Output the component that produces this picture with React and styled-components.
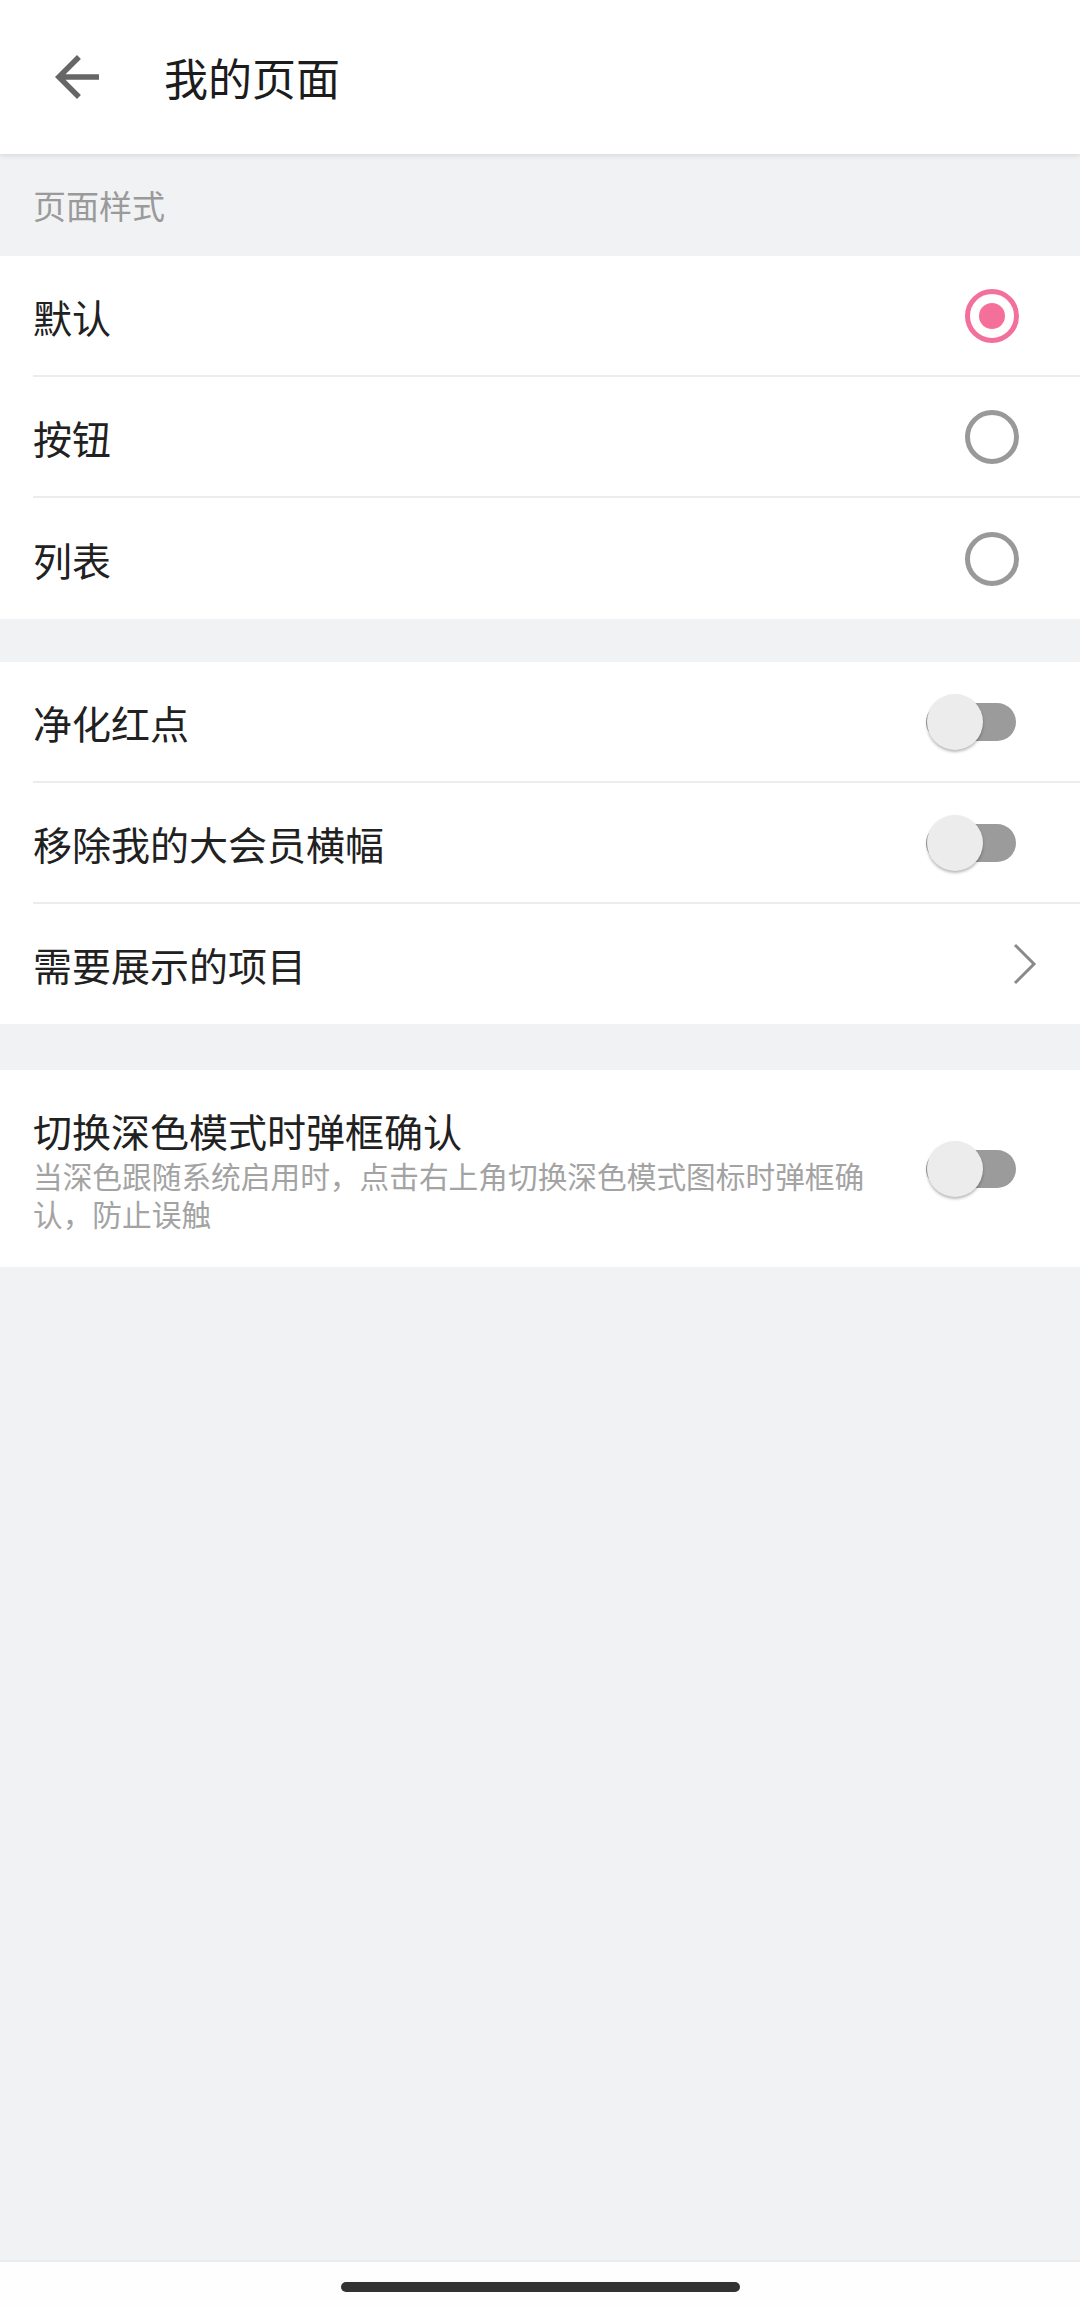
import React from "react";
import styled, { createGlobalStyle } from "styled-components";

const GlobalStyle = createGlobalStyle`
  html, body {
    margin: 0;
    padding: 0;
    background: #f1f2f4;
  }
  * {
    box-sizing: border-box;
  }
  body {
    font-family: "Noto Sans CJK SC", "Noto Sans", sans-serif;
  }
`;

const Page = styled.div`
  min-height: 100vh;
  display: flex;
  flex-direction: column;
  background: #f1f2f4;
`;

const Header = styled.header`
  height: 154px;
  display: flex;
  align-items: center;
  background: #fff;
  box-shadow: 0 2px 5px rgba(0, 0, 0, 0.1);
  position: relative;
  z-index: 1;
`;

const BackButton = styled.div`
  width: 66px;
  height: 66px;
  margin-left: 44px;
  display: flex;
  color: #666;
`;

const Title = styled.h1`
  margin: 0 0 0 54px;
  font-size: 44px;
  font-weight: 400;
  color: #1c1c1c;
  line-height: 1;
`;

const SectionLabel = styled.div`
  height: 102px;
  display: flex;
  align-items: center;
  padding-left: 33px;
  font-size: 33px;
  color: #9a9a9a;
`;

const Group = styled.div`
  background: #fff;
  margin-top: ${({ $gap }) => $gap || 0}px;
`;

const Row = styled.div`
  margin-left: 33px;
  height: ${({ $height }) => $height || 121}px;
  display: flex;
  align-items: center;
  justify-content: space-between;
  border-bottom: ${({ $last }) => ($last ? "none" : "2px solid #ececec")};
`;

const Label = styled.span`
  font-size: 39px;
  color: #212121;
  line-height: 50px;
`;

const TextBlock = styled.div`
  width: 852px;
  display: flex;
  flex-direction: column;
`;

const SubLabel = styled.span`
  margin-top: 2px;
  font-size: 29.7px;
  line-height: 38px;
  color: #a3a3a3;
`;

const Radio = styled.div`
  width: 54px;
  height: 54px;
  margin-right: 61px;
  border-radius: 50%;
  border: 5px solid ${({ $checked }) => ($checked ? "#f2709a" : "#999")};
  display: flex;
  align-items: center;
  justify-content: center;

  &::after {
    content: "";
    width: 26px;
    height: 26px;
    border-radius: 50%;
    background: ${({ $checked }) => ($checked ? "#f4709b" : "transparent")};
  }
`;

const Switch = styled.div`
  position: relative;
  width: 92px;
  height: 56px;
  margin-right: 64px;
  flex-shrink: 0;
`;

const Track = styled.div`
  position: absolute;
  left: 2px;
  right: 0;
  top: 9px;
  height: 38px;
  border-radius: 19px;
  background: #9b9b9b;
`;

const Thumb = styled.div`
  position: absolute;
  left: 3px;
  top: 0;
  width: 56px;
  height: 56px;
  border-radius: 50%;
  background: #ececec;
  box-shadow: 0 2px 3px rgba(0, 0, 0, 0.28);
`;

const Chevron = styled.div`
  width: 24px;
  height: 42px;
  margin-right: 43px;
  display: flex;
`;

const Filler = styled.div`
  flex: 1;
`;

const NavBar = styled.div`
  height: 46px;
  background: #fdfefd;
  border-top: 2px solid #ebecee;
  display: flex;
  justify-content: center;
  padding-top: 20px;
`;

const HomeIndicator = styled.div`
  width: 399px;
  height: 10px;
  border-radius: 5px;
  background: #333;
`;

const Toggle = () => (
  <Switch>
    <Track />
    <Thumb />
  </Switch>
);

const styles = [
  { name: "默认", checked: true },
  { name: "按钮", checked: false },
  { name: "列表", checked: false }
];

const App = () => {
  return (
    <Page>
      <GlobalStyle />
      <Header>
        <BackButton>
          <svg viewBox="0 0 24 24" width="66" height="66" fill="currentColor">
            <path d="M20 11H7.83l5.59-5.59L12 4l-8 8 8 8 1.41-1.41L7.83 13H20v-2z" />
          </svg>
        </BackButton>
        <Title>我的页面</Title>
      </Header>

      <SectionLabel>页面样式</SectionLabel>
      <Group>
        {styles.map((item, index) => (
          <Row key={item.name} $last={index === styles.length - 1}>
            <Label>{item.name}</Label>
            <Radio $checked={item.checked} />
          </Row>
        ))}
      </Group>

      <Group $gap={43}>
        <Row>
          <Label>净化红点</Label>
          <Toggle />
        </Row>
        <Row>
          <Label>移除我的大会员横幅</Label>
          <Toggle />
        </Row>
        <Row $last $height={120}>
          <Label>需要展示的项目</Label>
          <Chevron>
            <svg viewBox="0 0 24 42" width="24" height="42">
              <polyline
                points="2,2 21,21 2,40"
                fill="none"
                stroke="#8a8a8a"
                strokeWidth="3"
              />
            </svg>
          </Chevron>
        </Row>
      </Group>

      <Group $gap={46}>
        <Row $last $height={197}>
          <TextBlock>
            <Label>切换深色模式时弹框确认</Label>
            <SubLabel>
              当深色跟随系统启用时，点击右上角切换深色模式图标时弹框确认，防止误触
            </SubLabel>
          </TextBlock>
          <Toggle />
        </Row>
      </Group>

      <Filler />
      <NavBar>
        <HomeIndicator />
      </NavBar>
    </Page>
  );
};

export default App;
